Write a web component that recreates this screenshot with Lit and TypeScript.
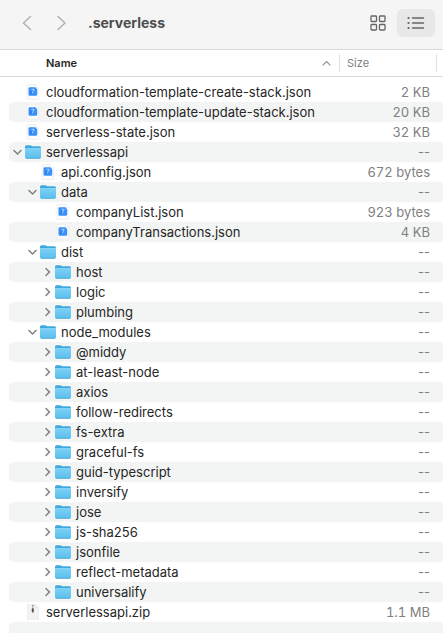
import { LitElement, html, css, svg, nothing } from "lit";
import { customElement, property, state } from "lit/decorators.js";
import { classMap } from "lit/directives/class-map.js";
import { styleMap } from "lit/directives/style-map.js";

type Kind = "folder" | "json" | "zip";

interface Entry {
  name: string;
  kind: Kind;
  size?: string;
  open?: boolean;
  children?: Entry[];
}

const folder = (name: string, children?: Entry[]): Entry => ({
  name,
  kind: "folder",
  open: !!children,
  children,
});
const json = (name: string, size: string): Entry => ({ name, kind: "json", size });

const ENTRIES: Entry[] = [
  json("cloudformation-template-create-stack.json", "2 KB"),
  json("cloudformation-template-update-stack.json", "20 KB"),
  json("serverless-state.json", "32 KB"),
  folder("serverlessapi", [
    json("api.config.json", "672 bytes"),
    folder("data", [
      json("companyList.json", "923 bytes"),
      json("companyTransactions.json", "4 KB"),
    ]),
    folder("dist", [folder("host"), folder("logic"), folder("plumbing")]),
    folder(
      "node_modules",
      [
        "@middy",
        "at-least-node",
        "axios",
        "follow-redirects",
        "fs-extra",
        "graceful-fs",
        "guid-typescript",
        "inversify",
        "jose",
        "js-sha256",
        "jsonfile",
        "reflect-metadata",
        "universalify",
      ].map((name) => folder(name)),
    ),
  ]),
  { name: "serverlessapi.zip", kind: "zip", size: "1.1 MB" },
];

@customElement("file-icon")
export class FileIcon extends LitElement {
  static styles = css`
    :host {
      display: block;
      width: 16px;
      height: 16px;
    }
    svg {
      display: block;
    }
  `;

  @property() kind: Kind = "json";

  private shape() {
    if (this.kind === "folder") {
      return svg`
        <defs>
          <linearGradient id="front" x1="0" y1="0" x2="0" y2="1">
            <stop offset="0" stop-color="#7bd0f6" />
            <stop offset="1" stop-color="#5cbfec" />
          </linearGradient>
        </defs>
        <path d="M0 2.800Q0 1.200 1.500 1.200h3.700q.7 0 1.200.5l.5.5h7.600Q16 2.200 16 3.700v9H0z" fill="#40a9dc" />
        <path d="M0 4.300h16v9q0 1.300-1.300 1.300H1.300Q0 14.600 0 13.300z" fill="url(#front)" />
        <path d="M0 4.500h16" stroke="#8fdafa" stroke-width=".7" />
        <path d="M1 14.300h14" stroke="#45a5d3" stroke-width=".8" />`;
    }
    if (this.kind === "zip") {
      return svg`
        <path d="M2.500.5h8l3 3v12h-11z" fill="#f3f3f3" stroke="#e9e9e9" stroke-width=".7" />
        <path d="M10.500.5v3h3" fill="#fff" stroke="#e4e4e4" stroke-width=".7" />
        <path d="M7.800 1v4" stroke="#888" stroke-width="1.500" stroke-dasharray="1 .5" />
        <rect x="6.800" y="4.500" width="2" height="4" rx=".7" fill="#555" />`;
    }
    return svg`
      <path d="M2 .5h8.500l3 3v12H2z" fill="#fafbfd" stroke="#e9ebee" stroke-width=".7" />
      <path d="M10.500.5v3h3" fill="#fff" stroke="#e4e8ec" stroke-width=".7" />
      <path d="M4.800 3.200h5.400l2 2v5.200q0 1.400-1.400 1.400H4.900q-1.400 0-1.400-1.400V4.600q0-1.400 1.300-1.400z" fill="#3990f7" />
      <path d="M6.500 5.300h2.700L7.200 9.300" fill="none" stroke="#a9d3ff" stroke-width="1" />
      <path d="M6.200 7.300v2.500" stroke="#1768cf" stroke-width=".8" />`;
  }

  render() {
    return html`<svg width="16" height="16" viewBox="0 0 16 16" aria-hidden="true">${this.shape()}</svg>`;
  }
}

@customElement("app-root")
export class AppRoot extends LitElement {
  static styles = css`
    :host {
      display: flex;
      flex-direction: column;
      min-height: 100vh;
      background: #fff;
      color: #262626;
      font: 13px/20px Inter, "Liberation Sans", sans-serif;
    }
    button {
      display: grid;
      place-items: center;
      margin: 0;
      padding: 0;
      border: 0;
      background: none;
      color: inherit;
      font: inherit;
    }
    svg {
      display: block;
      fill: none;
      stroke: currentColor;
      stroke-linecap: round;
      stroke-linejoin: round;
    }
    .toolbar {
      display: flex;
      align-items: center;
      box-sizing: border-box;
      height: 50px;
      padding: 0 8px 4px 16px;
      background: #f5f5f5;
      border-bottom: 1px solid #d9d9d9;
    }
    .nav {
      display: flex;
      gap: 12px;
      color: #b2b2b2;
    }
    .nav button {
      width: 22px;
      height: 28px;
    }
    h1 {
      flex: 1;
      margin: 0 0 0 16px;
      color: #4d4d4d;
      font-size: 14px;
      font-weight: 700;
    }
    .views {
      display: flex;
      color: #666;
    }
    .views button {
      width: 38px;
      height: 28px;
      border-radius: 6px;
    }
    .views .selected {
      background: #e8e8e8;
    }
    table {
      width: 100%;
      table-layout: fixed;
      border-collapse: separate;
      border-spacing: 0;
    }
    th,
    td {
      padding: 0;
      text-align: left;
      font-weight: 400;
    }
    .size-col {
      width: 104px;
    }
    thead th {
      height: 26px;
      border-bottom: 1px solid #d9d9d9;
      font-size: 11px;
      line-height: 18px;
    }
    .head {
      display: flex;
      align-items: center;
      justify-content: space-between;
    }
    .head-name {
      padding: 0 8px 0 46px;
      font-weight: 600;
    }
    .head-name svg {
      color: #999;
    }
    .head-size {
      margin-right: 6px;
      padding-left: 7px;
      border: solid #e0e0e0;
      border-width: 0 1px;
      color: #808080;
    }
    .gap td {
      height: 5px;
    }
    .name {
      padding-left: 9px;
    }
    .line {
      display: flex;
      align-items: center;
      height: 20px;
      border-radius: 5px 0 0 5px;
      white-space: nowrap;
    }
    .striped .line,
    .striped .size {
      background: #f3f4f4;
    }
    .toggle {
      width: 16px;
      height: 20px;
      color: #808080;
    }
    .label {
      margin-left: 5px;
    }
    .size {
      padding-right: 13px;
      color: #808080;
      text-align: right;
    }
    .known {
      font-variant-numeric: tabular-nums;
    }
    .rest {
      flex: 1;
      margin-left: 9px;
      border-radius: 5px 0 0 0;
      background: #f3f4f4;
    }
  `;

  @state() private entries = ENTRIES;

  private flatten(list: Entry[], depth = 0): { entry: Entry; depth: number }[] {
    return list.flatMap((entry) => [
      { entry, depth },
      ...(entry.open && entry.children ? this.flatten(entry.children, depth + 1) : []),
    ]);
  }

  private toggle(entry: Entry) {
    entry.open = !entry.open;
    this.entries = [...this.entries];
  }

  private row(entry: Entry, depth: number, index: number) {
    return html`
      <tr class=${classMap({ striped: index % 2 === 1 })}>
        <td class="name">
          <div class="line" style=${styleMap({ paddingLeft: `${depth * 15}px` })}>
            ${entry.kind === "folder"
              ? html`<button
                  class="toggle"
                  aria-label=${`Toggle ${entry.name}`}
                  aria-expanded=${entry.open ? "true" : "false"}
                  @click=${() => this.toggle(entry)}
                >
                  <svg width="10" height="10" viewBox="0 0 10 10" stroke-width="1.500">
                    <path d=${entry.open ? "M2 3.500 5.500 7 9 3.500" : "M4 1.500 7.500 5 4 8.500"} />
                  </svg>
                </button>`
              : html`<span class="toggle"></span>`}
            <file-icon .kind=${entry.kind}></file-icon>
            <span class="label">${entry.name}</span>
          </div>
        </td>
        <td class=${classMap({ size: true, known: !!entry.size })}>${entry.size ?? "--"}</td>
      </tr>
    `;
  }

  render() {
    const rows = this.flatten(this.entries);
    return html`
      <header class="toolbar">
        <nav class="nav">
          <button aria-label="Back">
            <svg width="10" height="16" viewBox="0 0 10 16" stroke-width="1.500"><path d="M8.500 1.500 1.500 8l7 6.500" /></svg>
          </button>
          <button aria-label="Forward">
            <svg width="10" height="16" viewBox="0 0 10 16" stroke-width="1.500"><path d="m2 1.500 7 6.500-7 6.500" /></svg>
          </button>
        </nav>
        <h1>.serverless</h1>
        <div class="views">
          <button aria-label="Icon view">
            <svg width="16" height="16" viewBox="0 0 16 16" stroke-width="1.300">
              <rect x="1" y="1" width="5.500" height="5.500" rx=".8" />
              <rect x="9.500" y="1" width="5.500" height="5.500" rx=".8" />
              <rect x="1" y="9.500" width="5.500" height="5.500" rx=".8" />
              <rect x="9.500" y="9.500" width="5.500" height="5.500" rx=".8" />
            </svg>
          </button>
          <button class="selected" aria-label="List view" aria-pressed="true">
            <svg width="18" height="14" viewBox="0 0 18 14" stroke-width="1.400">
              <path d="M5.500 2h11M5.500 7h11M5.500 12h11" />
              <path d="M1.500 2h.1M1.500 7h.1M1.500 12h.1" stroke-width="2.200" />
            </svg>
          </button>
        </div>
      </header>
      <table>
        <colgroup>
          <col />
          <col class="size-col" />
        </colgroup>
        <thead>
          <tr>
            <th scope="col" aria-sort="ascending">
              <div class="head head-name">
                Name
                <svg width="10" height="8" viewBox="0 0 10 8" stroke-width="1.100"><path d="M2 6 5.500 2.500 9 6" /></svg>
              </div>
            </th>
            <th scope="col"><div class="head head-size">Size</div></th>
          </tr>
        </thead>
        <tbody>
          <tr class="gap"><td colspan="2"></td></tr>
          ${rows.map(({ entry, depth }, i) => this.row(entry, depth, i))}
        </tbody>
      </table>
      ${rows.length % 2 === 1 ? html`<div class="rest"></div>` : nothing}
    `;
  }
}
